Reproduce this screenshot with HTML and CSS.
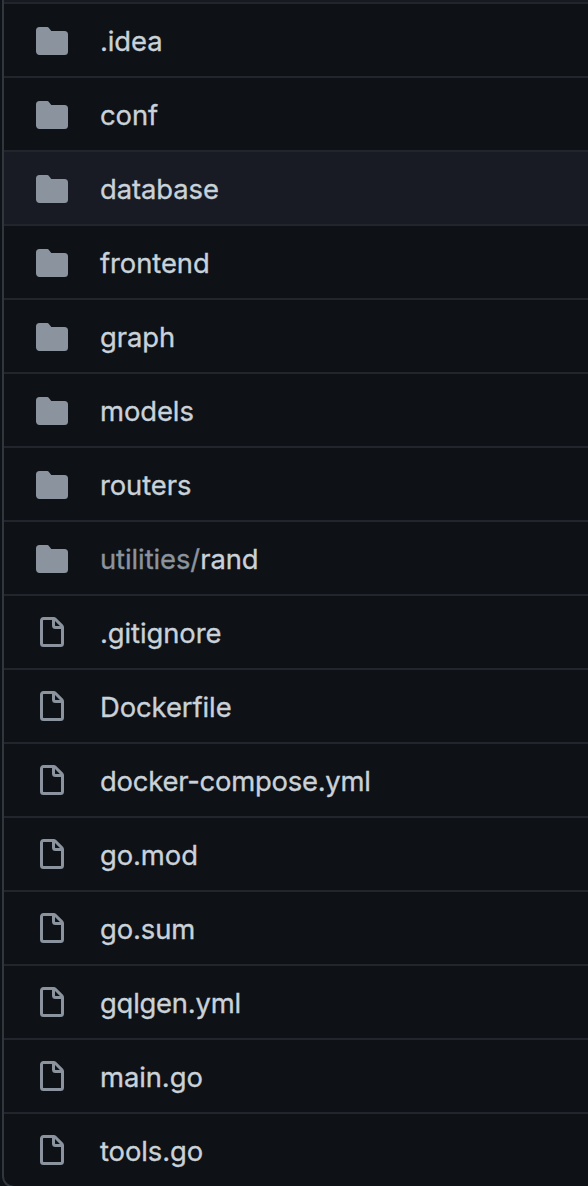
FILE: index.html
```
<!DOCTYPE html>
<html lang="en">
<head>
<meta charset="utf-8">
<title>Files</title>
<link rel="stylesheet" href="styles.css">
</head>
<body>
<svg class="sprite" aria-hidden="true">
<symbol id="dir" viewBox="0 0 16 16"><path d="M1.75 1A1.75 1.75 0 0 0 0 2.75v10.5C0 14.216.784 15 1.75 15h12.5A1.75 1.75 0 0 0 16 13.25v-8.5A1.75 1.75 0 0 0 14.25 3h-6.5a.25.25 0 0 1-.2-.1l-.9-1.2c-.33-.44-.85-.7-1.4-.7h-3.5z"/></symbol>
<symbol id="file" viewBox="0 0 16 16"><path fill-rule="evenodd" d="M3.75 1.5a.25.25 0 0 0-.25.25v11.5c0 .138.112.25.25.25h8.5a.25.25 0 0 0 .25-.25V6H9.75A1.75 1.75 0 0 1 8 4.25V1.5H3.75zm5.75.56v2.19c0 .138.112.25.25.25h2.19L9.5 2.06zM2 1.75C2 .784 2.784 0 3.75 0h5.086c.464 0 .909.184 1.237.513l3.414 3.414c.329.328.513.773.513 1.237v8.086A1.75 1.75 0 0 1 12.25 15h-8.5A1.75 1.75 0 0 1 2 13.25V1.75z"/></symbol>
</svg>
<main class="files">
<div class="row"><svg class="icon"><use href="#dir"/></svg><span class="name">.idea</span></div>
<div class="row"><svg class="icon"><use href="#dir"/></svg><span class="name">conf</span></div>
<div class="row active"><svg class="icon"><use href="#dir"/></svg><span class="name">database</span></div>
<div class="row"><svg class="icon"><use href="#dir"/></svg><span class="name">frontend</span></div>
<div class="row"><svg class="icon"><use href="#dir"/></svg><span class="name">graph</span></div>
<div class="row"><svg class="icon"><use href="#dir"/></svg><span class="name">models</span></div>
<div class="row"><svg class="icon"><use href="#dir"/></svg><span class="name">routers</span></div>
<div class="row"><svg class="icon"><use href="#dir"/></svg><span class="name"><span class="muted">utilities/</span>rand</span></div>
<div class="row"><svg class="icon"><use href="#file"/></svg><span class="name">.gitignore</span></div>
<div class="row"><svg class="icon"><use href="#file"/></svg><span class="name">Dockerfile</span></div>
<div class="row"><svg class="icon"><use href="#file"/></svg><span class="name tight">docker-compose.yml</span></div>
<div class="row"><svg class="icon"><use href="#file"/></svg><span class="name">go.mod</span></div>
<div class="row"><svg class="icon"><use href="#file"/></svg><span class="name">go.sum</span></div>
<div class="row"><svg class="icon"><use href="#file"/></svg><span class="name tight">gqlgen.yml</span></div>
<div class="row"><svg class="icon"><use href="#file"/></svg><span class="name">main.go</span></div>
<div class="row"><svg class="icon"><use href="#file"/></svg><span class="name">tools.go</span></div>
</main>
</body>
</html>
```
FILE: styles.css
```
* { box-sizing: border-box; }
body { margin: 0; height: 1186px; overflow: hidden; background: #0e1116; }
.sprite { display: none; }
.files {
  margin-left: 2px;
  padding-top: 2px;
  background: linear-gradient(#171a21 2px, transparent 2px);
  border-left: 2px solid #30363d;
  border-bottom: 2px solid #30363d;
  border-bottom-left-radius: 12px;
  overflow: hidden;
  font: 27.4px/42px Inter, sans-serif;
  letter-spacing: -0.08px;
  -webkit-text-stroke: 0.35px;
  color: #c9d1d9;
}
.row { height: 74px; border-top: 2px solid #22252b; display: flex; align-items: center; gap: 32px; padding: 2px 32px 0; }
.active { background: #181b23; }
.icon { flex: none; width: 32px; height: 32px; fill: #8b949e; }
.name { white-space: nowrap; }
.tight { letter-spacing: -0.22px; }
.muted { color: #8b949e; }
```
